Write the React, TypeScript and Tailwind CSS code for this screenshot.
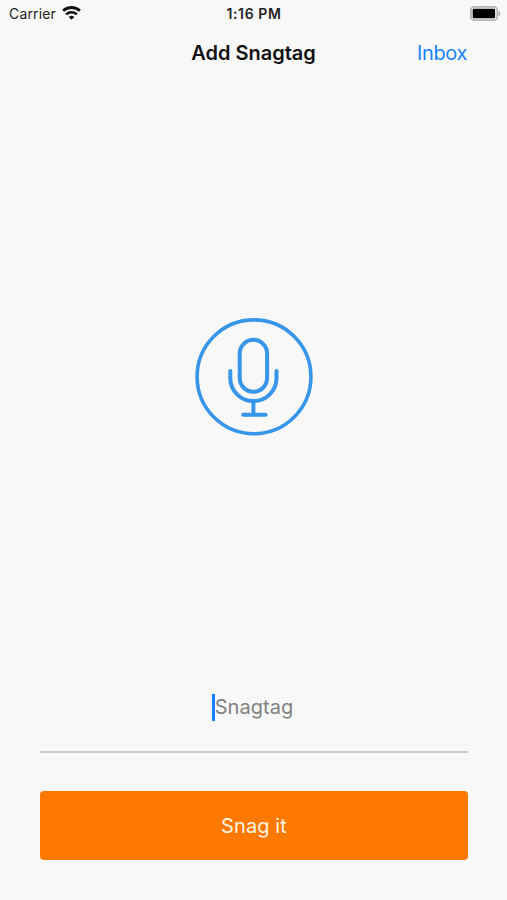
const WifiIcon = () => (
  <svg width="19" height="14" viewBox="0 0 19 14" fill="none" stroke="#111" strokeWidth="2.8">
    <path d="M1.1 4.8A12.4 12.4 0 0 1 17.9 4.8" />
    <path d="M4.1 8.4A8 8 0 0 1 14.9 8.4" strokeWidth="2.5" />
    <path d="M6.7 11A4.3 4.3 0 0 1 12.3 11L9.5 13.8Z" fill="#111" stroke="none" />
  </svg>
);

const BatteryIcon = () => (
  <svg width="31" height="15" viewBox="0 0 31 15">
    <rect x="0.9" y="0.9" width="26.4" height="13.2" rx="3.6" fill="#f8f8f8" stroke="#b5b5b5" strokeWidth="1.8" />
    <rect x="2.7" y="2.8" width="22.4" height="9.4" rx="1.2" fill="#000" />
    <path d="M28.4 4.9C30.9 6 30.9 9 28.4 10.1Z" fill="#a8a8a8" />
  </svg>
);

const MicIcon = () => (
  <svg
    width="118"
    height="118"
    viewBox="0 0 118 118"
    fill="none"
    stroke="#3795ea"
    strokeWidth="4"
    strokeLinecap="round"
  >
    <circle cx="59" cy="58.8" r="56.9" strokeWidth="3.6" />
    <rect x="44.7" y="21.8" width="27.4" height="52" rx="13.7" />
    <path d="M35.3 53V60A23.1 23.1 0 0 0 81.5 60V53" />
    <path d="M58.4 83.2V96.6" />
    <path d="M48.2 96.8H70.6" />
  </svg>
);

const StatusBar = () => (
  <div className="flex h-[26px] items-center justify-between pl-[9px] pr-[6px] text-[14px] text-[#222]">
    <div className="flex flex-1 items-center gap-[6px]">
      <span className="tracking-[0.15px]">Carrier</span>
      <WifiIcon />
    </div>
    <span className="mr-[2px] font-semibold tracking-[0.6px]">1:16 PM</span>
    <div className="flex flex-1 justify-end">
      <BatteryIcon />
    </div>
  </div>
);

const NavBar = () => (
  <div className="grid h-[52px] grid-cols-[1fr_auto_1fr] items-center px-10 pt-[2px]">
    <span />
    <h1 className="text-[20px] font-semibold text-[#111]">Add Snagtag</h1>
    <button className="justify-self-end text-[20px] tracking-[-0.4px] text-[#1782f6]">Inbox</button>
  </div>
);

export default function App() {
  return (
    <div className="flex h-[900px] w-[507px] flex-col overflow-hidden bg-[#f8f8f8] font-['Inter',sans-serif]">
      <StatusBar />
      <NavBar />
      <main className="flex flex-1 flex-col px-10">
        <div className="flex justify-center pt-[240px]">
          <MicIcon />
        </div>
        <div className="mt-auto flex h-[90px] w-[428px] items-center justify-center border-b-2 border-[#cbcbcb] pr-[3px]">
          <span className="h-[27px] w-[3px] bg-[#1681fa]" />
          <span className="text-[20px] tracking-[0.05px] text-[#808080]">Snagtag</span>
        </div>
        <button className="mb-[40px] mt-[38px] h-[69px] w-[428px] rounded-[4px] bg-[#ff7800] text-[20px] tracking-[0.1px] text-[#fff6e6]">
          Snag it
        </button>
      </main>
    </div>
  );
}
